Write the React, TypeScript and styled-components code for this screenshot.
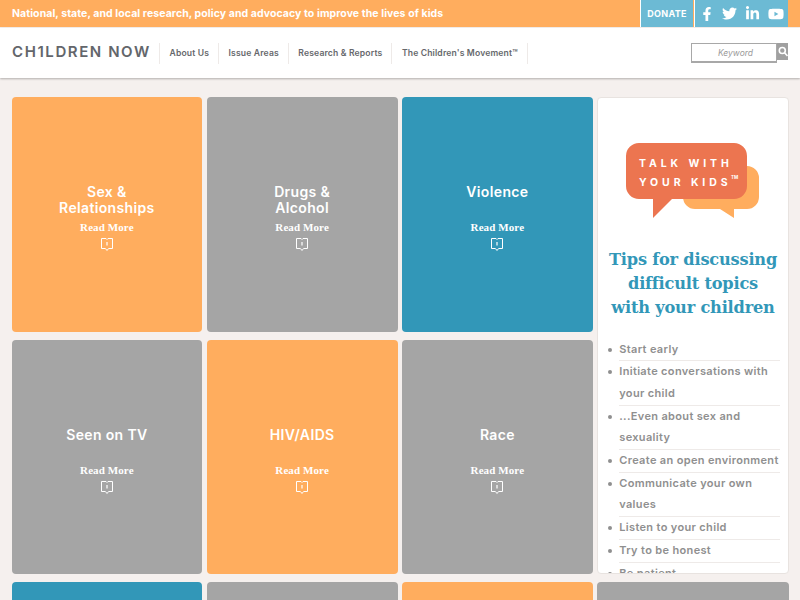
import React from "react";
import styled, { createGlobalStyle } from "styled-components";
import { FaFacebookF, FaTwitter, FaLinkedinIn, FaYoutube } from "react-icons/fa";

const Global = createGlobalStyle`
  html, body { margin: 0; height: 100%; overflow: hidden; background: #f5f0ee; }
  body { font-family: "Inter", "Liberation Sans", sans-serif; }
  * { box-sizing: border-box; }
`;

const TopBar = styled.div`
  height: 27px;
  background: #ffad5e;
  display: flex;
  align-items: stretch;
  padding: 0 12px;
`;
const Tagline = styled.div`
  flex: 1;
  color: #fff;
  font-size: 10.5px;
  font-weight: 700;
  letter-spacing: 0.08px;
  line-height: 27px;
`;
const Donate = styled.a`
  width: 52px;
  background: #6cbad4;
  color: #fff;
  font-size: 9px;
  font-weight: 700;
  letter-spacing: 0.3px;
  line-height: 28px;
  text-align: center;
  border-left: 1px solid #fff;
  box-sizing: content-box;
  margin-right: 1px;
`;
const Social = styled.div`
  width: 94px;
  background: #6cbad4;
  color: #fff;
  display: flex;
  align-items: center;
  justify-content: space-between;
  padding: 0 4px 0 5px;
  border-left: 1px solid #fff;
`;
const Header = styled.header`
  height: 50px;
  background: #fff;
  margin-top: 1px;
  box-shadow: 0 1px 2px rgba(0, 0, 0, 0.28);
  display: flex;
  align-items: center;
  padding: 0 12px;
`;
const Logo = styled.div`
  width: 147px;
  color: #63666b;
  font-size: 15px;
  font-weight: 600;
  letter-spacing: 1.58px;
  line-height: 16px;
  margin-top: -2px;
  white-space: nowrap;
`;
const Nav = styled.nav`
  display: flex;
  flex: 1;
  height: 21px;
`;
const NavItem = styled.a`
  display: block;
  padding: 0 9px 0 9.5px;
  border-left: 1px solid #eeeae8;
  color: #66686c;
  font-size: 8.6px;
  font-weight: 600;
  letter-spacing: 0.15px;
  line-height: 21px;
  white-space: nowrap;
  &:last-child { border-right: 1px solid #eeeae8; }
`;
const Search = styled.div`
  display: flex;
  align-items: flex-start;
  height: 20px;
`;
const SearchInput = styled.div`
  width: 86px;
  height: 20px;
  border: 1px solid #a8a8a8;
  border-bottom-width: 2px;
  color: #999;
  font-size: 8.5px;
  font-style: italic;
  line-height: 18px;
  text-align: center;
  padding-left: 3px;
`;
const SearchButton = styled.div`
  width: 11px;
  height: 17px;
  background: #a0a0a0;
  display: flex;
  align-items: center;
  justify-content: center;
`;
const Grid = styled.main`
  display: grid;
  grid-template-columns: repeat(3, 190.75px) 191.5px;
  grid-template-rows: 235.5px 234.5px 235px;
  column-gap: 4.5px;
  row-gap: 7.5px;
  padding: 18.5px 0 0 11.5px;
`;
const Tile = styled.a<{ $color: string }>`
  display: block;
  background: ${(p) => p.$color};
  border-radius: 4px;
  color: #fff;
  text-align: center;
  padding-top: 87px;
`;
const TileTitle = styled.div`
  height: 33px;
  font-size: 14px;
  font-weight: 600;
  letter-spacing: 0.35px;
  line-height: 16.3px;
  white-space: pre-line;
`;
const ReadMore = styled.div`
  margin-top: 3px;
  font-family: "Liberation Serif", serif;
  font-size: 11px;
  font-weight: 700;
  letter-spacing: 0.1px;
  line-height: 14px;
`;
const BookIcon = styled.svg`
  display: block;
  margin: 4px auto 0;
`;
const Panel = styled.aside`
  grid-column: 4;
  grid-row: 1 / span 2;
  background: #fff;
  border: 1px solid #e8e3e0;
  border-radius: 4px;
  overflow: hidden;
  padding-top: 45px;
`;
const Badge = styled.svg`
  display: block;
  margin-left: 27px;
`;
const PanelTitle = styled.h2`
  margin: 27px 0 0;
  color: #3297b8;
  font-family: "DejaVu Serif", serif;
  font-size: 16.2px;
  font-weight: 700;
  line-height: 24px;
  letter-spacing: -0.2px;
  text-align: center;
`;
const Tips = styled.ul`
  list-style: none;
  margin: 19px 8px 0 21px;
  padding: 0;
`;
const Tip = styled.li`
  position: relative;
  color: #8f8f8f;
  font-size: 11px;
  font-weight: 600;
  letter-spacing: 0.34px;
  line-height: 21.7px;
  border-bottom: 1px solid #eeeae8;
  white-space: pre-line;
  &::before {
    content: "";
    position: absolute;
    left: -11px;
    top: 9px;
    width: 4px;
    height: 4px;
    border-radius: 50%;
    background: #8f8f8f;
  }
`;

const OR = "#ffad5e", GR = "#a5a5a5", TL = "#3297b8";
const rowOne = [
  { t: "Sex &\nRelationships", c: OR },
  { t: "Drugs &\nAlcohol", c: GR },
  { t: "Violence", c: TL },
];
const rowTwo = [
  { t: "Seen on TV", c: GR },
  { t: "HIV/AIDS", c: OR },
  { t: "Race", c: GR },
];
const rowThree = [TL, GR, OR, GR];
const tips = [
  "Start early",
  "Initiate conversations with\nyour child",
  "...Even about sex and\nsexuality",
  "Create an open environment",
  "Communicate your own\nvalues",
  "Listen to your child",
  "Try to be honest",
  "Be patient",
];

const Book = () => (
  <BookIcon width="12" height="13" viewBox="0 0 12 13" fill="none" stroke="#fff" strokeWidth="1">
    <path d="M.5.5H5L6 1.500 7 .5h4.500v10H7.600L6 12.500 4.400 10.500H.5z" />
    <path d="M6 4v3.500" strokeWidth="1.200" />
  </BookIcon>
);

const TileCard = ({ t, c }: { t: string; c: string }) => (
  <Tile $color={c}>
    <TileTitle>{t}</TileTitle>
    <ReadMore>Read More</ReadMore>
    <Book />
  </Tile>
);

export default function App() {
  return (
    <>
      <Global />
      <TopBar>
        <Tagline>National, state, and local research, policy and advocacy to improve the lives of kids</Tagline>
        <Donate>DONATE</Donate>
        <Social>
          <FaFacebookF size={14} />
          <FaTwitter size={15} />
          <FaLinkedinIn size={15} />
          <FaYoutube size={16} />
        </Social>
      </TopBar>
      <Header>
        <Logo>CH1LDREN NOW</Logo>
        <Nav>
          <NavItem>About Us</NavItem>
          <NavItem>Issue Areas</NavItem>
          <NavItem>Research &amp; Reports</NavItem>
          <NavItem>The Children's Movement™</NavItem>
        </Nav>
        <Search>
          <SearchInput>Keyword</SearchInput>
          <SearchButton>
            <svg width="10" height="11" viewBox="0 0 10 11" fill="none" stroke="#fff" strokeWidth="1.600">
              <circle cx="4.300" cy="4.500" r="3" />
              <path d="M6.500 6.800 9.500 10" />
            </svg>
          </SearchButton>
        </Search>
      </Header>
      <Grid>
        {rowOne.map((x) => <TileCard key={x.t} t={x.t} c={x.c} />)}
        <Panel>
          <Badge width="136" height="78" viewBox="0 0 136 78">
            <path d="M67 23h55a12 12 0 0 1 12 12v19a12 12 0 0 1-12 12h-13v9L95 66H70a12 12 0 0 1-12-12z" fill="#ffad5e" />
            <path d="M14 0h95a13 13 0 0 1 13 13v30a13 13 0 0 1-13 13H47L28 75V56H14A13 13 0 0 1 1 43V13A13 13 0 0 1 14 0z" fill="#ec7550" />
            <text x="14" y="24" fill="#fff" fontFamily="Inter, sans-serif" fontSize="10.500" fontWeight="700" letterSpacing="3.900">TALK WITH</text>
            <text x="14" y="42.500" fill="#fff" fontFamily="Inter, sans-serif" fontSize="10.500" fontWeight="700" letterSpacing="3.900">YOUR KIDS</text>
            <text x="106" y="36" fill="#fff" fontFamily="Inter, sans-serif" fontSize="4.500" fontWeight="700">TM</text>
          </Badge>
          <PanelTitle>Tips for discussing<br />difficult topics<br />with your children</PanelTitle>
          <Tips>
            {tips.map((t) => <Tip key={t}>{t}</Tip>)}
          </Tips>
        </Panel>
        {rowTwo.map((x) => <TileCard key={x.t} t={x.t} c={x.c} />)}
        {rowThree.map((c, i) => <Tile key={i} $color={c} />)}
      </Grid>
    </>
  );
}
